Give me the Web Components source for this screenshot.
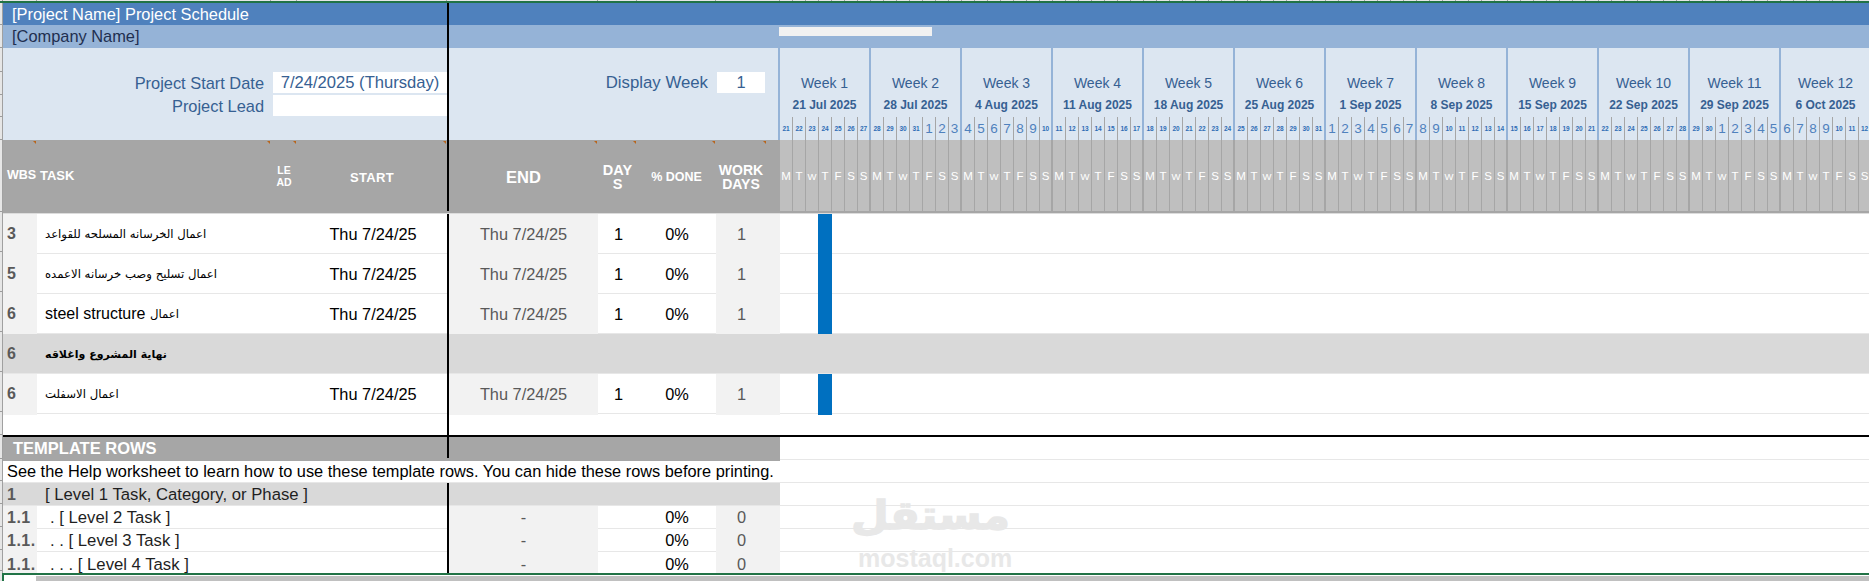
<!DOCTYPE html>
<html lang="en">
<head>
<meta charset="utf-8">
<title>Project Schedule</title>
<style>
  html,body{margin:0;padding:0;background:#fff;overflow:hidden}
  body{font-family:"Liberation Sans",Arial,"DejaVu Sans",sans-serif;width:1869px;height:581px}
</style>
</head>
<body>
<gantt-sheet>
  <band-row tone="title">[Project Name] Project Schedule</band-row>
  <band-row tone="company" scroller>[Company Name]</band-row>
  <plan-head start="2025-07-21" weeks="12" project-start="7/24/2025 (Thursday)" display-week="1"></plan-head>
  <task-row wbs="3" start="Thu 7/24/25" end="Thu 7/24/25" days="1" done="0%" work="1" bar><ar-text>اعمال الخرسانه المسلحه للقواعد</ar-text></task-row>
  <task-row wbs="5" start="Thu 7/24/25" end="Thu 7/24/25" days="1" done="0%" work="1" bar><ar-text>اعمال تسليح وصب خرسانه الاعمده</ar-text></task-row>
  <task-row wbs="6" start="Thu 7/24/25" end="Thu 7/24/25" days="1" done="0%" work="1" bar>steel structure <ar-text>اعمال</ar-text></task-row>
  <task-row wbs="6" tone="group"><ar-text bold>نهاية المشروع واغلاقه</ar-text></task-row>
  <task-row wbs="6" start="Thu 7/24/25" end="Thu 7/24/25" days="1" done="0%" work="1" bar><ar-text>اعمال الاسفلت</ar-text></task-row>
  <spacer-row></spacer-row>
  <template-head>TEMPLATE ROWS</template-head>
  <help-row>See the Help worksheet to learn how to use these template rows. You can hide these rows before printing.</help-row>
  <task-row compact wbs="1" tone="group">[ Level 1 Task, Category, or Phase ]</task-row>
  <task-row compact wbs="1.1" end="-" done="0%" work="0"><span style="padding-left:5px">. [ Level 2 Task ]</span></task-row>
  <task-row compact wbs="1.1." end="-" done="0%" work="0"><span style="padding-left:5px">. . [ Level 3 Task ]</span></task-row>
  <task-row compact last wbs="1.1." end="-" done="0%" work="0"><span style="padding-left:5px">. . . [ Level 4 Task ]</span></task-row>
</gantt-sheet>

<script>
const COLS = '34px 234px 26px 150px 2px 149px 39px 79px 64px 1fr';
const esc = s => String(s ?? '').replace(/&/g,'&amp;').replace(/</g,'&lt;');

class Base extends HTMLElement {
  constructor(){ super(); this.attachShadow({mode:'open'}); }
  connectedCallback(){ this.shadowRoot.innerHTML = `<style>${this.css()}</style>${this.html()}`; }
  css(){ return ':host{display:block}'; }
  html(){ return '<slot></slot>'; }
  a(n){ return this.getAttribute(n); }
}

customElements.define('gantt-sheet', class extends Base {
  css(){ return `
    :host{display:block;position:relative;width:1869px;height:581px;overflow:hidden;--cols:${COLS};color:#000;font-size:16px}
    .ruler{height:1px;display:grid;grid-template-columns:3px var(--cols);background:#e6e6e6}
    .ruler i{border-right:1px solid #a0a0a0}
    .ruler b{display:block;background:repeating-linear-gradient(90deg,#e6e6e6 0 12px,#a0a0a0 12px 13px)}
    .green{height:2px;background:#217346}
    .mid{display:flex;height:570px}
    .gut{width:3px;flex:none;box-sizing:border-box;background:#e6e6e6;border-right:1px solid #a0a0a0;display:flex;flex-direction:column}
    .gut i{flex:none;box-sizing:border-box;border-bottom:1px solid #9c9c9c}
    .main{flex:1;min-width:0;display:flex;flex-direction:column}
    .foot{height:8px;background:#e6e6e6;display:flex}
    .foot-in{flex:1;margin-left:2px;background:#fff;border-top:2px solid #217346;border-left:2px solid #217346;display:flex}
    .thumb{flex:1;margin:1px 0 0 32px;background:#c0c0c0}
    .mark{position:absolute;left:858px;top:491px;width:152px;color:#e8e8e8;pointer-events:none;line-height:1}
    .mark .ar{font:bold 43.5px/48px "DejaVu Sans",sans-serif;height:48px;direction:rtl;display:block;white-space:nowrap;text-align:center;transform:scale(1,.92);-webkit-text-stroke:1.5px #e8e8e8;stroke-linejoin:round}
    .mark .en{font:bold 25px/24px "Liberation Sans",sans-serif;display:block;margin-top:7px;text-align:center}
  `; }
  html(){
    const ticks = [22,23,24,23,22,23,72,40,40,40,40,40,23,24,22,23,23,23,21]
      .map(h=>`<i style="height:${h}px"></i>`).join('');
    return `
    <div class="ruler"><i></i><i></i><i></i><i></i><i></i><span></span><i></i><i></i><i></i><i></i><b></b></div>
    <div class="green"></div>
    <div class="mid"><div class="gut">${ticks}</div><div class="main"><slot></slot></div></div>
    <div class="foot"><div class="foot-in"><div class="thumb"></div></div></div>
    <div class="mark"><span class="ar" lang="ar">مستقل</span><span class="en">mostaql.com</span></div>`;
  }
});

customElements.define('band-row', class extends Base {
  css(){
    const title = this.a('tone')==='title';
    return `
    :host{display:grid;grid-template-columns:444px 2px 329px 1fr;height:${title?22:23}px;
      background:${title?'#4f81bd':'#95b3d7'};color:${title?'#fff':'#1f2f50'};font-size:16.4px;line-height:${title?22:23}px}
    .t{padding-left:9px;white-space:nowrap}
    .k{background:#000}
    .sc{width:153px;height:9px;margin:2px 0 0 1px;background:#f1f1f1}
    `;
  }
  html(){
    return `<div class="t"><slot></slot></div><div class="k"></div><div></div><div>${this.hasAttribute('scroller')?'<div class="sc"></div>':''}</div>`;
  }
});

customElements.define('week-col', class extends Base {
  css(){ return `
    :host{display:flex;flex-direction:column;flex:none;width:91px;box-sizing:border-box}
    .top{height:92px;box-sizing:border-box;background:#dce6f1;border-left:2px solid #95b3d7;padding-top:24px;color:#366092;text-align:center;display:flex;flex-direction:column}
    .wk{height:22px;line-height:22px;font-size:14px;color:#366092}
    .dt{height:23px;line-height:23px;font-size:12px;font-weight:bold;white-space:nowrap}
    .row{display:grid;grid-template-columns:13px 13px 13px 13px 13px 13px 11px;height:23px}
    .row div{box-sizing:border-box;border-right:1px solid #a6a6a6;color:#4f81bd;display:flex;align-items:center;justify-content:center}
    .row div:last-child{border-right:0}
    .n1{font-size:13.5px}
    .n2{font-size:6.5px;font-weight:bold;color:#2f6db5 !important}
    .low{height:71px;box-sizing:border-box;border-left:2px solid #a6a6a6;display:grid;grid-template-columns:13px 13px 13px 13px 13px 13px 11px;background:#bfbfbf}
    .low div{box-sizing:border-box;border-right:1px solid #a6a6a6;color:#fff;font-size:11.5px;display:flex;align-items:center;justify-content:center;padding-top:1px}
    .low div:last-child{border-right:0}
    .low .w{font-size:9.5px}
  `; }
  html(){
    const s = new Date(this.a('date')+'T00:00:00Z');
    const M = ['Jan','Feb','Mar','Apr','May','Jun','Jul','Aug','Sep','Oct','Nov','Dec'];
    let nums='';
    for(let i=0;i<7;i++){
      const d = new Date(s.getTime()+i*864e5).getUTCDate();
      nums += `<div class="${d<10?'n1':'n2'}">${d}</div>`;
    }
    const lets = ['M','T','W','T','F','S','S'].map(l=>`<div class="${l==='W'?'w':''}">${l}</div>`).join('');
    return `<div class="top"><div class="wk">Week ${this.a('n')}</div>
      <div class="dt">${s.getUTCDate()} ${M[s.getUTCMonth()]} ${s.getUTCFullYear()}</div>
      <div class="row">${nums}</div></div><div class="low">${lets}</div>`;
  }
});

customElements.define('plan-head', class extends Base {
  css(){ return `
    :host{display:block}
    .wrap{display:flex;height:163px}
    .left{width:775px;flex:none;display:flex;flex-direction:column}
    .weeks{flex:1;min-width:0;display:flex;overflow:hidden}
    .info{height:92px;background:#dce6f1;display:grid;grid-template-columns:444px 2px 329px;color:#366092;font-size:16.4px}
    .k{background:#000}
    .fields{display:grid;grid-template-columns:270px 174px;grid-auto-rows:21px;row-gap:2px;padding-top:24px;align-content:start}
    .lab{text-align:right;padding-right:9px;line-height:22px;white-space:nowrap}
    .val{background:#fff;text-align:center;line-height:22px;white-space:nowrap;font-size:16.6px}
    .disp{display:flex;justify-content:flex-end;gap:9px;padding:24px 13px 0 0;align-items:flex-start}
    .disp span{line-height:22px;white-space:nowrap;font-size:16.8px}
    .disp b{font-weight:normal;width:48px;height:21px;line-height:21px;text-align:center;background:#fff}
    .cols{height:71px;background:#a6a6a6;display:grid;grid-template-columns:34px 234px 26px 150px 2px 149px 39px 79px 62px;color:#fff;font-weight:bold}
    .c{position:relative;display:flex;align-items:center;justify-content:center;text-align:center;padding-bottom:1px;box-sizing:border-box}
    .c.note::after{content:"";position:absolute;top:1px;right:1px;width:3px;height:3px;background:#b8651c;clip-path:polygon(0 0,100% 0,100% 100%)}
    .c.note2::after{right:12px}
    .band{height:3px;background:#a6a6a6;box-shadow:inset 0 -1px 0 #dcdcdc}
  `; }
  html(){
    const st = new Date(this.a('start')+'T00:00:00Z'); let w='';
    for(let i=0;i<+this.a('weeks');i++){
      const d = new Date(st.getTime()+i*7*864e5).toISOString().slice(0,10);
      w += `<week-col n="${i+1}" date="${d}"></week-col>`;
    }
    return `<div class="wrap"><div class="left">
      <div class="info">
        <div class="fields"><div class="lab">Project Start Date</div><div class="val">${esc(this.a('project-start'))}</div>
          <div class="lab">Project Lead</div><div class="val"></div></div>
        <div class="k"></div>
        <div class="disp"><span>Display Week</span><b>${esc(this.a('display-week'))}</b></div>
      </div>
      <div class="cols">
        <div class="c note" style="font-size:12.5px;justify-content:flex-start;padding-left:4px">WBS</div>
        <div class="c note" style="font-size:13px;justify-content:flex-start;padding-left:3px">TASK</div>
        <div class="c note" style="font-size:10.5px;line-height:12px;padding-top:1px">LE<br>AD</div>
        <div class="c note" style="font-size:13px;letter-spacing:.3px;padding-top:3px;padding-bottom:0">START</div>
        <div class="k"></div>
        <div class="c note" style="font-size:16.5px;padding-top:3px;padding-bottom:0">END</div>
        <div class="c note" style="font-size:14.5px;line-height:14px;padding-top:3px;padding-bottom:0">DAY<br>S</div>
        <div class="c note" style="font-size:12.5px;padding-top:3px;padding-bottom:0;white-space:nowrap">% DONE</div>
        <div class="c note note2" style="font-size:14px;line-height:14px;padding:3px 12px 0 0;white-space:nowrap">WORK<br>DAYS</div>
      </div></div>
      <div class="weeks">${w}</div></div><div class="band"></div>`;
  }
});

customElements.define('ar-text', class extends Base {
  css(){
    const b = this.hasAttribute('bold');
    return `:host{display:inline;font-family:"DejaVu Sans",sans-serif;font-size:${b?11:11.7}px;vertical-align:1.5px;${b?'font-weight:bold;':''}}`;
  }
});

customElements.define('task-row', class extends Base {
  css(){
    const compact = this.hasAttribute('compact'), last=this.hasAttribute('last'), group=this.a('tone')==='group';
    const h = compact ? (last?21:23) : 40;
    const bg = group ? (compact ? 'linear-gradient(90deg,#d9d9d9 0 777px,#fff 777px)' : '#d9d9d9') : '#fff';
    return `
    :host{display:grid;grid-template-columns:var(--cols);height:${h}px;box-sizing:border-box;
      border-bottom:${last?0:1}px solid #e7e7e7;background:${bg};font-size:16.35px;line-height:${compact?(last?25:23):39}px}
    .wbs{background:${group?'transparent':'#f2f2f2'};font-weight:bold;color:#595959;font-size:16px;padding-left:4px;overflow:hidden;white-space:nowrap;letter-spacing:${compact?'.5px':'0'}}
    .task{grid-column:span 2;padding-left:8px;white-space:nowrap;color:${compact?'#1f1f1f':'#000'};overflow:visible;font-size:${compact?'16.7px':'16px'}}
    .task{${this.querySelector('[bold]')?'font-weight:bold;':''}}
    .ctr{text-align:center;white-space:nowrap;${compact?'':'line-height:41px;'}}
    .k{background:#000;margin-bottom:-1px}
    .f2{background:${group?'transparent':'#f2f2f2'};color:#595959}
    .g{padding-left:38px;display:flex}
    .bar{width:14px;height:100%;background:#0070c0;box-shadow:0 1px 0 #fff}
    `;
  }
  html(){
    const t = n => esc(this.a(n));
    return `<div class="wbs">${t('wbs')}</div><div class="task"><slot></slot></div>
      <div class="ctr" style="padding-left:2px">${t('start')}</div><div class="k"></div>
      <div class="ctr f2">${t('end')}</div><div class="ctr" style="padding-left:2px">${t('days')}</div>
      <div class="ctr" style="padding-left:1px">${t('done')}</div><div class="ctr f2" style="padding-right:13px;box-sizing:border-box">${t('work')}</div>
      <div class="g">${this.hasAttribute('bar')?'<div class="bar"></div>':''}</div>`;
  }
});

customElements.define('spacer-row', class extends Base {
  css(){ return `:host{display:grid;grid-template-columns:444px 2px 1fr;height:23px;box-sizing:border-box;border-bottom:2px solid #000}.k{background:#000}`; }
  html(){ return '<div></div><div class="k"></div><div></div>'; }
});

customElements.define('template-head', class extends Base {
  css(){ return `
    :host{display:grid;grid-template-columns:444px 2px 331px 1fr;height:24px;color:#fff;font-weight:bold;font-size:16.5px;line-height:23px}
    .g{background:#a6a6a6}
    .t{padding-left:10px;white-space:nowrap}
    .k{background:linear-gradient(#000 0 21px,#a6a6a6 21px)}
    .r{height:23px;box-sizing:border-box;border-bottom:1px solid #e7e7e7}
  `; }
  html(){ return '<div class="g t"><slot></slot></div><div class="k"></div><div class="g"></div><div class="r"></div>'; }
});

customElements.define('help-row', class extends Base {
  css(){ return `:host{display:block;height:22px;box-sizing:border-box;border-bottom:1px solid #e7e7e7;font-size:16.35px;line-height:21px;padding-left:4px;white-space:nowrap;color:#000}`; }
});
</script>
</body>
</html>
